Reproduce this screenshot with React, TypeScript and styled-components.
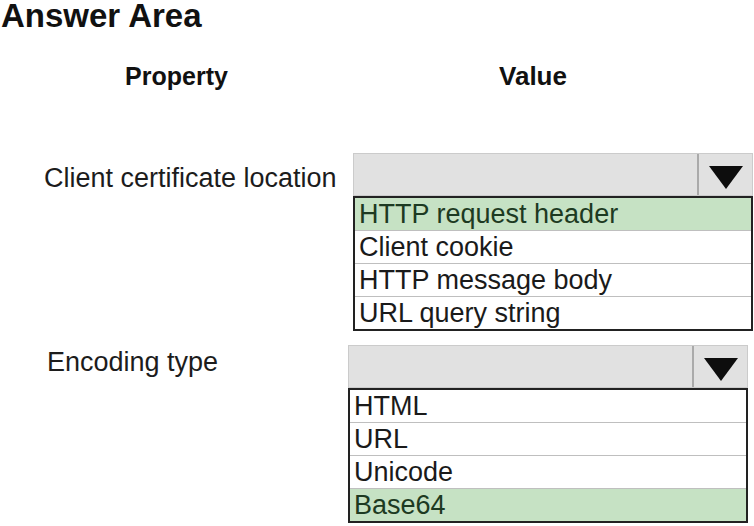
import styled, { createGlobalStyle } from 'styled-components';

const GlobalStyle = createGlobalStyle`
  html, body {
    margin: 0;
    padding: 0;
    background: #ffffff;
  }
`;

const Page = styled.div`
  width: 754px;
  height: 526px;
  overflow: hidden;
  background: #ffffff;
  font-family: 'Liberation Sans', Arial, sans-serif;
  color: #1a1a1a;
`;

const Title = styled.h1`
  margin: 0 0 0 1px;
  font-size: 33px;
  line-height: 32px;
  font-weight: 700;
  color: #111;
`;

const HeaderRow = styled.div`
  display: grid;
  grid-template-columns: 353px 360px;
  margin-top: 29px;
`;

const HeaderCell = styled.div<{ $size: number }>`
  font-size: ${(p) => p.$size}px;
  line-height: 30px;
  font-weight: 700;
  text-align: center;
  color: #111;
`;

const Row = styled.div<{ $gap: number }>`
  display: grid;
  grid-template-columns: 348px 1fr;
  align-items: start;
  margin-top: ${(p) => p.$gap}px;
`;

const Label = styled.div<{ $top: number; $left: number }>`
  font-size: 27px;
  line-height: 1.2;
  padding-top: ${(p) => p.$top}px;
  padding-left: ${(p) => p.$left}px;
  color: #1c1c1c;
`;

const Widget = styled.div<{ $inset: number }>`
  width: 400px;
  margin-left: ${(p) => p.$inset}px;
  display: flex;
  flex-direction: column;
`;

const SelectBox = styled.div`
  height: 41px;
  display: flex;
  background: #e1e1e1;
  border: 1px solid #cbcbcb;
`;

const SelectValue = styled.div`
  flex: 1;
`;

const ArrowCell = styled.div`
  width: 55px;
  border-left: 2px solid #aaaaaa;
  display: flex;
  align-items: center;
  justify-content: center;
  padding-top: 6px;
  box-sizing: border-box;
`;

const List = styled.ul`
  list-style: none;
  margin: 0;
  padding: 0;
  border: 2px solid #222;
  background: #fff;
`;

const Item = styled.li<{ $selected?: boolean }>`
  height: 32px;
  box-sizing: content-box;
  padding-left: 4px;
  font-size: 27px;
  line-height: 32px;
  white-space: nowrap;
  background: ${(p) => (p.$selected ? '#c6e2c4' : '#ffffff')};
  color: ${(p) => (p.$selected ? '#1d3a22' : '#1a1a1a')};
  border-bottom: 1px solid #bfbfbf;

  &:last-child {
    border-bottom: none;
  }
`;

function DownArrow() {
  return (
    <svg width="34" height="23" viewBox="0 0 34 23">
      <polygon points="0,0 34,0 17,23" fill="#0d0d0d" />
    </svg>
  );
}

type DropDownProps = {
  options: string[];
  selected: string;
  inset: number;
};

function DropDown({ options, selected, inset }: DropDownProps) {
  return (
    <Widget $inset={inset}>
      <SelectBox>
        <SelectValue />
        <ArrowCell>
          <DownArrow />
        </ArrowCell>
      </SelectBox>
      <List>
        {options.map((o) => (
          <Item key={o} $selected={o === selected}>
            {o}
          </Item>
        ))}
      </List>
    </Widget>
  );
}

export default function App() {
  return (
    <Page>
      <GlobalStyle />
      <Title>Answer Area</Title>
      <HeaderRow>
        <HeaderCell $size={25}>Property</HeaderCell>
        <HeaderCell $size={26}>Value</HeaderCell>
      </HeaderRow>
      <Row $gap={62}>
        <Label $top={9} $left={44}>
          Client certificate location
        </Label>
        <DropDown
          inset={5}
          selected="HTTP request header"
          options={[
            'HTTP request header',
            'Client cookie',
            'HTTP message body',
            'URL query string',
          ]}
        />
      </Row>
      <Row $gap={14}>
        <Label $top={1} $left={47}>
          Encoding type
        </Label>
        <DropDown
          inset={0}
          selected="Base64"
          options={['HTML', 'URL', 'Unicode', 'Base64']}
        />
      </Row>
    </Page>
  );
}
